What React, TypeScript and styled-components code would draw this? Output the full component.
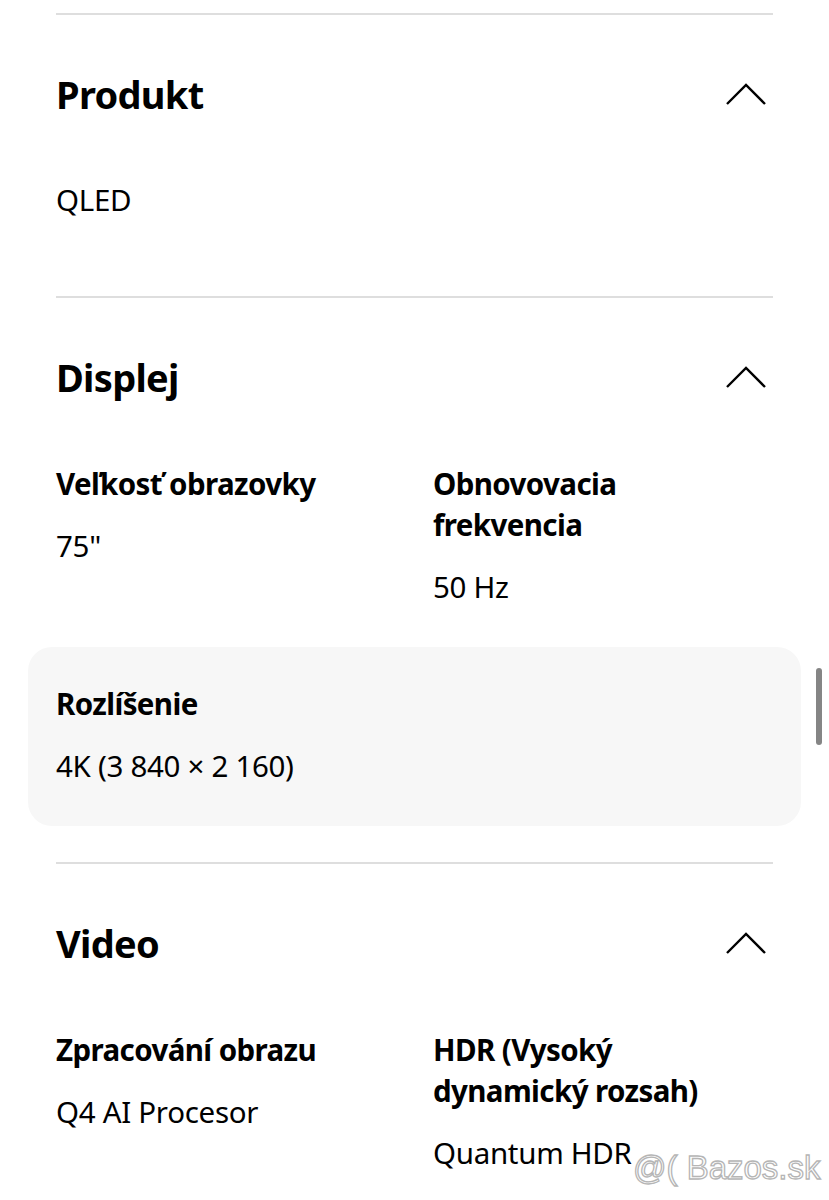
import React from "react";
import styled, { createGlobalStyle } from "styled-components";

const Global = createGlobalStyle`
  html, body { margin: 0; padding: 0; background: #ffffff; }
  body { font-family: "Noto Sans", "Open Sans", sans-serif; color: #000; }
`;

const Page = styled.div`
  position: relative;
  width: 829px;
  height: 1200px;
  overflow: hidden;
  background: #fff;
  padding: 13px 56px 0;
  box-sizing: border-box;
`;

const Section = styled.section`
  border-top: 2px solid #dedede;
  padding-bottom: 36px;
`;

const Header = styled.div`
  display: flex;
  align-items: center;
  justify-content: space-between;
  height: 50px;
  margin-top: 54px;
  margin-bottom: 25px;
`;

const Title = styled.h2`
  margin: 0;
  font-size: 38px;
  font-weight: 700;
  letter-spacing: -0.7px;
  line-height: 50px;
`;

const Chevron = styled.svg`
  width: 44px;
  height: 26px;
  margin-right: 5px;
  display: block;
`;

const Row = styled.div<{ $active?: boolean }>`
  display: grid;
  grid-template-columns: 340px 320px;
  column-gap: 37px;
  margin: 0 -28px;
  padding: 36px 28px 40px;
  border-radius: 24px;
  background: ${(p) => (p.$active ? "#f7f7f7" : "transparent")};
`;

const Item = styled.div`
  display: flex;
  flex-direction: column;
  gap: 22px;
`;

const Label = styled.div`
  font-size: 29.5px;
  font-weight: 700;
  line-height: 41px;
  letter-spacing: -0.6px;
`;

const Value = styled.div`
  font-size: 29.5px;
  font-weight: 400;
  line-height: 40px;
  letter-spacing: -0.3px;
`;

const Scrollbar = styled.div`
  position: absolute;
  left: 816px;
  top: 668px;
  width: 6px;
  height: 77px;
  border-radius: 3px;
  background: #858585;
`;

const Watermark = styled.div`
  position: absolute;
  left: 633px;
  top: 1148px;
  font-family: "Liberation Sans", Arial, sans-serif;
  font-size: 33px;
  line-height: 40px;
  color: rgba(255, 255, 255, 0.85);
  -webkit-text-stroke: 1.3px #b5b5b5;
  white-space: pre;
`;

type Spec = { label: string; value: string };
type Group = { title: string; rows: { items: Spec[]; active?: boolean }[] };

const groups: Group[] = [
  { title: "Produkt", rows: [{ items: [{ label: "", value: "QLED" }] }] },
  {
    title: "Displej",
    rows: [
      {
        items: [
          { label: "Veľkosť obrazovky", value: "75\"" },
          { label: "Obnovovacia frekvencia", value: "50 Hz" },
        ],
      },
      { items: [{ label: "Rozlíšenie", value: "4K (3 840 × 2 160)" }], active: true },
    ],
  },
  {
    title: "Video",
    rows: [
      {
        items: [
          { label: "Zpracování obrazu", value: "Q4 AI Procesor" },
          { label: "HDR (Vysoký dynamický rozsah)", value: "Quantum HDR" },
        ],
      },
    ],
  },
];

const ChevronUp = () => (
  <Chevron viewBox="0 0 44 26" fill="none">
    <path d="M3 23 L22 4 L41 23" stroke="#000" strokeWidth="2.4" strokeLinecap="butt" strokeLinejoin="miter" />
  </Chevron>
);

export default function App() {
  return (
    <>
      <Global />
      <Page>
        {groups.map((g) => (
          <Section key={g.title}>
            <Header>
              <Title>{g.title}</Title>
              <ChevronUp />
            </Header>
            {g.rows.map((r, i) => (
              <Row key={i} $active={r.active}>
                {r.items.map((it) => (
                  <Item key={it.value}>
                    {it.label && <Label>{it.label}</Label>}
                    <Value>{it.value}</Value>
                  </Item>
                ))}
              </Row>
            ))}
          </Section>
        ))}
        <Scrollbar />
        <Watermark>{"@( Bazos.sk"}</Watermark>
      </Page>
    </>
  );
}
